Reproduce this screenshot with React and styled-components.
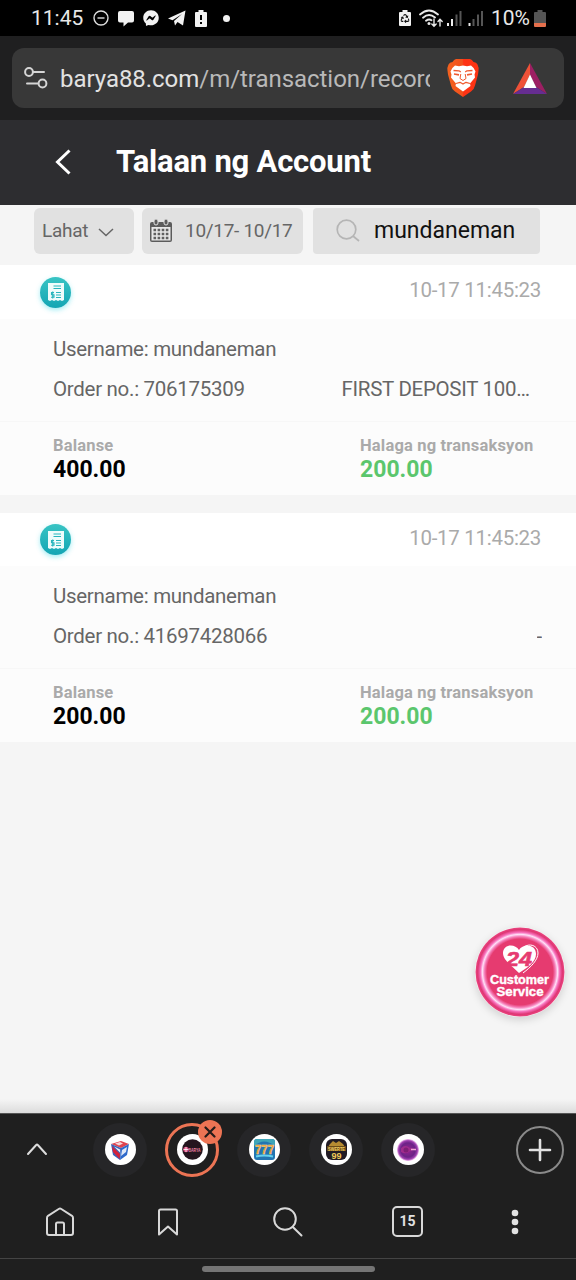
import React from "react"
import styled, { createGlobalStyle } from "styled-components"
import { FaFacebookMessenger, FaRecycle } from "react-icons/fa"

const records = [
  {
    time: "10-17 11:45:23",
    username: "mundaneman",
    order: "706175309",
    note: "FIRST DEPOSIT 100% BONUS",
    balance: "400.00",
    amount: "200.00",
  },
  {
    time: "10-17 11:45:23",
    username: "mundaneman",
    order: "41697428066",
    note: "-",
    balance: "200.00",
    amount: "200.00",
  },
]

const StatusIcons = () => (
  <StatusLeft>
    <svg width="16" height="16" viewBox="0 0 16 16" fill="none" stroke="#ddd" strokeWidth="1.4">
      <circle cx="8" cy="8" r="7" />
      <path d="M4.5 8h7" />
    </svg>
    <svg width="16" height="17" viewBox="0 0 16 17" fill="#f2f2f2">
      <path d="M2 1h12q2 0 2 2v7.500q0 2-2 2h-4L5.500 16.500V12.500H2q-2 0-2-2V3q0-2 2-2z" />
    </svg>
    <FaFacebookMessenger size={16} />
    <svg width="18" height="16" viewBox="0 0 18 16" fill="#f2f2f2">
      <path d="M0 8.500L17.500 0.500 15 15.500 9.500 12 7 15.500 6 11 14 4 4.500 10.300z" />
    </svg>
    <svg width="12" height="17" viewBox="0 0 12 17" fill="#f2f2f2">
      <path d="M3.500 0h5v2H11q1 0 1 1v13q0 1-1 1H1q-1 0-1-1V3q0-1 1-1h2.500z" />
      <path d="M6 5v5M6 12v2" stroke="#000" strokeWidth="2" />
    </svg>
    <Dot />
  </StatusLeft>
)

const StatusSignal = () => (
  <svg width="93" height="20" viewBox="0 0 93 20" fill="none">
    <path d="M3.500 2h5v2H11q1 0 1 1v12q0 1-1 1H1q-1 0-1-1V5q0-1 1-1h2.500z" fill="#f2f2f2" />
    <FaRecycle x="1.500" y="6" size={9} color="#111" />
    <g stroke="#e8e8e8" strokeWidth="1.800" strokeLinecap="round">
      <path d="M21 6.500Q30 -1.500 39 6.500M24 9.700Q30 4.500 36 9.500M27 12.800Q30 10.500 32.500 12.300" />
      <path d="M35 11v7M32.800 16l2.200 2.200 2.200-2.200M41 18v-6.500M39 13.500l2-2.200 2.200 2.200" strokeWidth="1.400" />
    </g>
    <circle cx="30" cy="15.500" r="1.500" fill="#e8e8e8" />
    <path d="M49 18v-3M53 18v-7" stroke="#eee" strokeWidth="2" />
    <path d="M57.500 18V6.500M61.500 18V3" stroke="#555" strokeWidth="2" />
    <path d="M70.500 18v-3" stroke="#eee" strokeWidth="2" />
    <path d="M74.500 18v-7M79 18V6.500M83 18V3" stroke="#555" strokeWidth="2" />
  </svg>
)

const BraveLogo = () => (
  <svg width="36" height="40" viewBox="0 0 36 40">
    <defs>
      <linearGradient id="lion" x1="0" y1="0" x2="1" y2="0">
        <stop offset="0" stopColor="#f4621f" />
        <stop offset="0.480" stopColor="#f1501c" />
        <stop offset="0.520" stopColor="#ff3214" />
        <stop offset="1" stopColor="#fb3414" />
      </linearGradient>
    </defs>
    <path
      d="M11 1h14q2 .3 3.500 3 3 .3 4 2.500 1.500 3 1 6l-.5 4-3 11q-.8 4-4 6L18 39l-8-5.500q-3.200-2-4-6l-3-11-.5-4q-.5-3 1-6 1-2.200 4-2.500Q9 1.300 11 1z"
      fill="url(#lion)"
    />
    <path
      d="M10 7.500l4 .8 4-.8 4 .8 4-.8q3.500 2.500 4.500 6l-1 3 .5 3-5 6 .5 2.500L18 33.500 10.500 28l.5-2.500-5-6 .5-3-1-3q1-3.500 4.500-6z"
      fill="#fff"
    />
    <g fill="none" stroke="#ef5a30" strokeLinejoin="round">
      <path d="M8.500 12.500l5.500.3 1.800 1.200M27.500 12.500l-5.500.3-1.800 1.200" strokeWidth="1.300" />
      <path d="M9 16l5 .8M27 16l-5 .8" strokeWidth="1.700" />
      <path d="M15.800 16l-.8 4.500 3 2 3-2-.8-4.500" strokeWidth="1" />
      <path d="M11 25.500l4-1.200 3 1.700 3-1.700 4 1.200" strokeWidth="1.300" />
    </g>
  </svg>
)

const BatLogo = () => (
  <svg width="34" height="31" viewBox="0 0 34 31">
    <path d="M17 0L0 31l11-7 6-12z" fill="#ef5138" />
    <path d="M17 0v12l6 12 11 7z" fill="#9c1f63" />
    <path d="M0 31h34l-11-7H11z" fill="#662d91" />
    <path d="M17 11.500L10.500 25h13z" fill="#fff" />
  </svg>
)

const CalendarIcon = () => (
  <svg width="22" height="24" viewBox="0 0 22 24">
    <path d="M2 3h18q2 0 2 2v16q0 2-2 2H2q-2 0-2-2V5q0-2 2-2z" fill="#5c5c5c" />
    <rect x="1.500" y="8" width="19" height="13.500" fill="#e8e8e8" />
    <rect x="4" y="0" width="4" height="6" rx="2" fill="#5c5c5c" stroke="#e1e1e1" />
    <rect x="14" y="0" width="4" height="6" rx="2" fill="#5c5c5c" stroke="#e1e1e1" />
    <path
      d="M3.500 11h15M3.500 15h15M3.500 19h15"
      stroke="#606060"
      strokeWidth="2.600"
      strokeDasharray="2.600 1.500"
    />
  </svg>
)

const ReceiptIcon = () => (
  <svg width="16" height="20" viewBox="0 0 16 20">
    <path d="M0 1h16v17l-2 1-2-1-2 1-2-1-2 1-2-1-2 1-2-1z" fill="#effcfb" />
    <path d="M5.500 4H13M5.500 6.500H13M8 10.500h5M8 13h5M8 15.500h5" stroke="#27b5bd" strokeWidth="1.200" />
    <path d="M6 10.500H3.500v2.300H6v2.500H3M4.700 9.500v7" fill="none" stroke="#27b5bd" strokeWidth="1.100" />
  </svg>
)

const ServiceBadge = () => (
  <svg width="90" height="90" viewBox="0 0 90 90">
    <defs>
      <radialGradient id="neon">
        <stop offset="0.740" stopColor="#e63b70" />
        <stop offset="0.795" stopColor="#f57bb6" />
        <stop offset="0.845" stopColor="#ffe0f8" />
        <stop offset="0.890" stopColor="#f76fba" />
        <stop offset="0.950" stopColor="#de3673" />
        <stop offset="1" stopColor="#ec4580" />
      </radialGradient>
    </defs>
    <circle cx="45" cy="45" r="44.500" fill="url(#neon)" />
    <path
      d="M44 46C36 38 28 33 28 26c0-9 12-10 16-3 4-7 17-6 17 4 0 8-9 14-17 19"
      fill="#fff"
    />
    <path d="M49 20c5-4 14-2 14 6 0 7-7 14-15 20" fill="none" stroke="#fff" strokeWidth="1" />
    <BadgeNumber x="31" y="38.500" textLength="26" lengthAdjust="spacingAndGlyphs">24</BadgeNumber>
    <BadgeText x="15" y="57" textLength="59" lengthAdjust="spacingAndGlyphs">Customer</BadgeText>
    <BadgeText x="21.500" y="68.500" textLength="47" lengthAdjust="spacingAndGlyphs">Service</BadgeText>
  </svg>
)

const CubeFavicon = () => (
  <svg width="20" height="20" viewBox="0 0 20 20">
    <path d="M1 4l10-3 8 3-8 4z" fill="#e0444f" />
    <path d="M1 4l10 4-1 12-7-5z" fill="#3a62b8" />
    <path d="M19 4l-8 4-1 12 7-5z" fill="#2e69cb" />
    <path d="M5 3.500l5-1.500 3 1.500-4 2z" fill="#f3d6dc" />
    <path d="M2 6l8 8-.3 5L3 12z" fill="#d3213a" />
    <path d="M4 6.500l6 3v3z" fill="#eff2fa" />
    <path d="M12 10l5-3-1 5-5 4z" fill="#dfe8f8" />
  </svg>
)

const LogoFavicon = () => (
  <svg width="21" height="21" viewBox="0 0 21 21">
    <circle cx="10.500" cy="10.500" r="10.300" fill="#24151e" />
    <circle cx="4" cy="10.500" r="2.700" fill="#db4c80" />
    <path d="M1.500 10.500h5M4 8v5" stroke="#fff" strokeWidth="0.800" />
    <FaviconText x="6.500" y="12.500" size="5" color="#f083a6" textLength="12" lengthAdjust="spacingAndGlyphs">BARYA</FaviconText>
  </svg>
)

const SevensFavicon = () => (
  <svg width="21" height="21" viewBox="0 0 21 21">
    <rect width="21" height="21" rx="3" fill="#2275b1" />
    <path d="M0 7Q10-2 21 7V3q0-3-3-3H3Q0 0 0 3z" fill="#3fa6b8" />
    <path d="M2 17.500q8-2 17 0" stroke="#65d3ef" strokeWidth="2" fill="none" />
    <FaviconText x="1" y="15" size="13" color="#f08a1c" $edge="#ffe39a" textLength="19" lengthAdjust="spacingAndGlyphs">777</FaviconText>
  </svg>
)

const GoldFavicon = () => (
  <svg width="21" height="21" viewBox="0 0 21 21">
    <rect width="21" height="21" rx="6" fill="#211b24" />
    <path d="M4 5l3-3 3 2 3-2 4 3 2 3H2z" fill="#b78b32" />
    <rect x="1" y="7" width="19" height="5" fill="#6b4b18" />
    <FaviconText x="2" y="11.500" size="5" color="#f3ce62" textLength="17" lengthAdjust="spacingAndGlyphs">SWERTE</FaviconText>
    <FaviconText x="5.500" y="19.500" size="9" color="#f0cc58" textLength="10" lengthAdjust="spacingAndGlyphs">99</FaviconText>
  </svg>
)

const OrbFavicon = () => (
  <svg width="22" height="22" viewBox="0 0 22 22">
    <defs>
      <radialGradient id="orb">
        <stop offset="0.200" stopColor="#8a238e" />
        <stop offset="0.650" stopColor="#6b2386" />
        <stop offset="0.850" stopColor="#9c3cad" />
        <stop offset="1" stopColor="#f5c6f1" />
      </radialGradient>
    </defs>
    <circle cx="11" cy="11" r="11" fill="url(#orb)" />
    <path d="M4 9q4-4 9 0l6 1-6 2q-4 4-9 1z" fill="#a02c8c" />
    <circle cx="9" cy="11" r="2.500" fill="#7d1f76" />
    <path d="M14 10.500h5" stroke="#f1a5d4" strokeWidth="1.500" />
  </svg>
)

const RecordCard = ({ record }) => (
  <Card>
    <CardTop>
      <ReceiptBadge>
        <ReceiptIcon />
      </ReceiptBadge>
      <Time>{record.time}</Time>
    </CardTop>
    <CardBody>
      <Line>
        <span>Username: {record.username}</span>
      </Line>
      <Line>
        <span>Order no.: {record.order}</span>
        <Note $dash={record.note === "-"}>{record.note}</Note>
      </Line>
    </CardBody>
    <CardFooter>
      <Amount>
        <AmountLabel>Balanse</AmountLabel>
        <AmountValue>{record.balance}</AmountValue>
      </Amount>
      <Amount>
        <AmountLabel>Halaga ng transaksyon</AmountLabel>
        <AmountValue $green>{record.amount}</AmountValue>
      </Amount>
    </CardFooter>
  </Card>
)

const App = () => (
  <Phone>
    <GlobalStyle />
    <StatusBar>
      <Clock>11:45</Clock>
      <StatusIcons />
      <StatusRight>
        <StatusSignal />
        <Percent>10%</Percent>
        <svg width="12" height="17" viewBox="0 0 12 17">
          <path d="M3.500 0h5v2H11q1 0 1 1v10H0V3q0-1 1-1h2.500z" fill="#555" />
          <path d="M0 13h12v3q0 1-1 1H1q-1 0-1-1z" fill="#e5704d" />
        </svg>
      </StatusRight>
    </StatusBar>
    <BrowserBar>
      <UrlField>
        <svg width="24" height="22" viewBox="0 0 24 22" fill="none" stroke="#d5d5d5" strokeWidth="2">
          <circle cx="5" cy="5" r="3.900" />
          <circle cx="18.500" cy="16.500" r="3.900" />
          <path d="M9 5h11M3 16.500h11" strokeLinecap="round" />
        </svg>
        <Url>
          <UrlHost>barya88.com</UrlHost>/m/transaction/record
        </Url>
        <BraveLogo />
        <BatLogo />
      </UrlField>
    </BrowserBar>
    <Header>
      <svg width="18" height="28" viewBox="0 0 18 28" fill="none" stroke="#fff" strokeWidth="3">
        <path d="M15.500 2.500L3.500 14l12 11.500" />
      </svg>
      <Title>Talaan ng Account</Title>
    </Header>
    <Content>
      <Filters>
        <TypeFilter>
          Lahat
          <Chevron width="16" height="9" viewBox="0 0 16 9" fill="none" stroke="#666" strokeWidth="1.500">
            <path d="M1 1l7 6.500L15 1" />
          </Chevron>
        </TypeFilter>
        <DateFilter>
          <CalendarIcon />
          <span>10/17- 10/17</span>
        </DateFilter>
        <SearchFilter>
          <svg width="24" height="24" viewBox="0 0 24 24" fill="none" stroke="#b5b5b5" strokeWidth="1.700">
            <circle cx="10.500" cy="10.500" r="9.300" />
            <path d="M17 17l6 5" />
          </svg>
          <span>mundaneman</span>
        </SearchFilter>
      </Filters>
      {records.map(record => (
        <RecordCard key={record.order} record={record} />
      ))}
      <Service>
        <ServiceBadge />
      </Service>
    </Content>
    <BottomBar>
      <TabStrip>
        <ChevronButton>
          <svg width="22" height="14" viewBox="0 0 22 14" fill="none" stroke="#ddd" strokeWidth="2" strokeLinecap="round" strokeLinejoin="round">
            <path d="M2 12l8.200-9q.8-1 1.600 0L20 12" />
          </svg>
        </ChevronButton>
        <Tab>
          <Favicon><CubeFavicon /></Favicon>
        </Tab>
        <Tab $active>
          <Favicon><LogoFavicon /></Favicon>
          <CloseBadge>
            <svg width="12" height="12" viewBox="0 0 12 12" stroke="#241c1a" strokeWidth="2.200" strokeLinecap="round">
              <path d="M1.500 1.500l9 9M10.500 1.500l-9 9" />
            </svg>
          </CloseBadge>
        </Tab>
        <Tab>
          <Favicon><SevensFavicon /></Favicon>
        </Tab>
        <Tab>
          <Favicon><GoldFavicon /></Favicon>
        </Tab>
        <Tab>
          <Favicon><OrbFavicon /></Favicon>
        </Tab>
        <AddTab>
          <svg width="24" height="24" viewBox="0 0 24 24" stroke="#e2e2e2" strokeWidth="2.600" strokeLinecap="round">
            <path d="M12 2v20M2 12h20" />
          </svg>
        </AddTab>
      </TabStrip>
      <NavRow>
        <svg width="28" height="30" viewBox="0 0 28 30" fill="none" stroke="#d8d8d8" strokeWidth="2" strokeLinejoin="round">
          <path d="M1 11q0-1.500 1-2.200L12.700 2q1.300-.8 2.600 0L26 8.800q1 .7 1 2.200V26q0 2-2 2H3q-2 0-2-2z" />
          <path d="M10 28V17q0-1.500 1.500-1.500h5Q18 15.500 18 17v11" />
        </svg>
        <svg width="20" height="28" viewBox="0 0 20 28" fill="none" stroke="#d8d8d8" strokeWidth="2" strokeLinejoin="round">
          <path d="M1 3q0-1.500 1.500-1.500h15Q19 1.500 19 3v23.500l-9-8-9 8z" />
        </svg>
        <svg width="30" height="30" viewBox="0 0 30 30" fill="none" stroke="#d8d8d8" strokeWidth="2" strokeLinecap="round">
          <circle cx="12" cy="12" r="10.800" />
          <path d="M19.800 20l8.700 8.500" />
        </svg>
        <TabCount>15</TabCount>
        <svg width="8" height="26" viewBox="0 0 8 26" fill="#e2e2e2">
          <circle cx="4" cy="4" r="3.300" />
          <circle cx="4" cy="13" r="3.300" />
          <circle cx="4" cy="22" r="3.300" />
        </svg>
      </NavRow>
      <GestureBar>
        <GestureHandle />
      </GestureBar>
    </BottomBar>
  </Phone>
)

const GlobalStyle = createGlobalStyle`
  * {
    box-sizing: border-box;
  }
  body {
    margin: 0;
    font-family: Roboto, "Liberation Sans", sans-serif;
  }
  svg {
    display: block;
    flex-shrink: 0;
  }
`

const Phone = styled.div`
  display: flex;
  flex-direction: column;
  width: 576px;
  height: 1280px;
  overflow: hidden;
  background-color: #f5f5f5;
`

const StatusBar = styled.div`
  display: flex;
  align-items: center;
  height: 36px;
  padding: 0 30px 0 31px;
  background-color: #000;
  color: #e8e8e8;
`

const Clock = styled.span`
  width: 62px;
  font-size: 21px;
`

const StatusLeft = styled.div`
  display: flex;
  align-items: center;
  gap: 9px;
  color: #f2f2f2;
`

const Dot = styled.div`
  width: 7px;
  height: 7px;
  margin-left: 7px;
  border-radius: 50%;
  background-color: #f2f2f2;
`

const StatusRight = styled.div`
  display: flex;
  align-items: center;
  margin-left: auto;
`

const Percent = styled.span`
  width: 42px;
  margin-left: -1px;
  margin-right: 1px;
  font-size: 21px;
`

const BrowserBar = styled.div`
  height: 84px;
  padding: 12px;
  background-color: #1f1f20;
`

const UrlField = styled.div`
  display: flex;
  align-items: center;
  height: 60px;
  padding: 0 17px 0 12px;
  border-radius: 12px;
  background-color: #383838;
`

const Url = styled.div`
  flex: none;
  width: 370px;
  margin: 2px 15px 0 12px;
  overflow: hidden;
  white-space: nowrap;
  font-size: 24px;
  letter-spacing: -0.04px;
  line-height: 32px;
  color: #b9b9b9;

  & + svg + svg {
    margin-left: 32px;
  }
`

const UrlHost = styled.span`
  color: #e2e2e2;
`

const Header = styled.div`
  display: flex;
  align-items: center;
  height: 85px;
  padding: 0 0 2px 54px;
  background-color: #2d2d30;
`

const Title = styled.h1`
  margin: 0 0 0 44px;
  font-size: 31px;
  font-weight: 700;
  letter-spacing: -0.22px;
  color: #fff;
`

const Content = styled.div`
  position: relative;
  height: 908px;
  background: linear-gradient(#f5f5f5 calc(100% - 14px), #dcdcdc);
`

const Filters = styled.div`
  display: flex;
  gap: 8px;
  height: 60px;
  padding: 3px 36px 11px 34px;
`

const Filter = styled.div`
  display: flex;
  align-items: center;
  height: 46px;
  padding-bottom: 1px;
  border-radius: 6px;
  background-color: #e1e1e1;
  color: #666;
  font-size: 19px;
  letter-spacing: -0.3px;
`

const TypeFilter = styled(Filter)`
  gap: 10px;
  width: 100px;
  padding-left: 8px;
`

const Chevron = styled.svg`
  margin-top: 4px;
`

const DateFilter = styled(Filter)`
  gap: 13px;
  width: 161px;
  padding-left: 8px;
`

const SearchFilter = styled(Filter)`
  gap: 14px;
  width: 227px;
  margin-left: 2px;
  padding-left: 23px;
  border-radius: 4px;
  color: #111;
  font-size: 23px;
  letter-spacing: 0;
`

const Card = styled.div`
  height: 230px;
  background-color: #fcfcfc;

  & + & {
    height: 229px;
    margin-top: 18px;
  }
`

const CardTop = styled.div`
  display: flex;
  align-items: center;
  justify-content: space-between;
  height: 54px;
  padding: 0 35px 0 40px;
  background-color: #fff;

  ${Card} + ${Card} & {
    height: 53px;
  }
`

const ReceiptBadge = styled.div`
  display: flex;
  align-items: center;
  justify-content: center;
  width: 31px;
  height: 31px;
  border-radius: 50%;
  background: linear-gradient(#38c4c4, #14a5b4);
  box-shadow: 0 2px 5px rgba(50, 215, 230, 0.45);
`

const Time = styled.span`
  margin-top: -4px;
  font-size: 20.5px;
  letter-spacing: -0.3px;
  color: #aaa;
`

const CardBody = styled.div`
  height: 103px;
  padding: 10px 46px 0 53px;
  border-bottom: 1px solid #f7f7f7;
`

const Line = styled.div`
  display: flex;
  justify-content: space-between;
  height: 40px;
  font-size: 20.5px;
  letter-spacing: -0.29px;
  line-height: 40px;
  color: #666;
`

const Note = styled.span`
  width: ${props => (props.$dash ? "auto" : "188.5px")};
  margin-right: ${props => (props.$dash ? "-12px" : "0")};
  overflow: hidden;
  text-overflow: ellipsis;
  white-space: nowrap;
`

const CardFooter = styled.div`
  display: grid;
  grid-template-columns: 307px 1fr;
  height: 73px;
  padding: 14px 0 0 53px;
`

const Amount = styled.div`
  display: flex;
  flex-direction: column;
`

const AmountLabel = styled.span`
  font-size: 16.5px;
  font-weight: 700;
  letter-spacing: 0.18px;
  line-height: 20px;
  color: #aaa;
`

const AmountValue = styled.span`
  font-size: 23px;
  font-weight: 700;
  line-height: 27px;
  color: ${props => (props.$green ? "#5bc66d" : "#000")};
`

const Service = styled.div`
  position: absolute;
  right: 11px;
  top: 722px;
  border-radius: 50%;
  box-shadow: 0 3px 9px rgba(0, 0, 0, 0.15);
`

const BadgeText = styled.text`
  font-family: "Liberation Sans", sans-serif;
  font-size: 13px;
  font-weight: 700;
  fill: #fff;
  stroke: #fff;
  stroke-width: 0.4px;
`

const BadgeNumber = styled.text`
  font-family: "Liberation Sans", sans-serif;
  font-size: 20px;
  font-style: italic;
  font-weight: 700;
  fill: #e63b70;
  stroke: #e63b70;
  stroke-width: 0.6px;
`

const BottomBar = styled.div`
  height: 167px;
  border-top: 1px solid #555;
  background-color: #1f1f1f;
`

const TabStrip = styled.div`
  display: flex;
  align-items: center;
  gap: 18px;
  height: 71px;
  padding: 0 12px 0 0;
`

const ChevronButton = styled.div`
  display: flex;
  justify-content: center;
  width: 75px;
  padding: 0 2px 2px 0;
`

const Tab = styled.div`
  position: relative;
  display: flex;
  align-items: center;
  justify-content: center;
  width: 54px;
  height: 54px;
  border-radius: 50%;
  border: ${props => (props.$active ? "3px solid #ec7454" : "none")};
  background-color: ${props => (props.$active ? "#1f1f1f" : "#262628")};
`

const Favicon = styled.div`
  display: flex;
  align-items: center;
  justify-content: center;
  width: 31px;
  height: 31px;
  border-radius: 50%;
  background-color: #fff;
`

const FaviconText = styled.text`
  font-family: "Liberation Sans", sans-serif;
  font-size: ${props => props.size}px;
  font-weight: 700;
  fill: ${props => props.color};
  stroke: ${props => props.$edge || "none"};
  stroke-width: 0.5px;
`

const CloseBadge = styled.div`
  position: absolute;
  top: -6px;
  right: -6px;
  display: flex;
  align-items: center;
  justify-content: center;
  width: 24px;
  height: 24px;
  border-radius: 50%;
  background-color: #ec7454;
`

const AddTab = styled.div`
  display: flex;
  align-items: center;
  justify-content: center;
  width: 48px;
  height: 48px;
  margin-left: auto;
  border: 2.5px solid #8a8a8a;
  border-radius: 50%;
`

const NavRow = styled.div`
  display: grid;
  grid-template-columns: 120px 95px 146px 93px 122px;
  align-items: center;
  justify-items: center;
  height: 73px;
`

const TabCount = styled.div`
  width: 31px;
  height: 31px;
  border: 2px solid #d8d8d8;
  border-radius: 5px;
  font-size: 14px;
  font-weight: 700;
  line-height: 27px;
  text-align: center;
  color: #e2e2e2;
`

const GestureBar = styled.div`
  display: flex;
  justify-content: center;
  height: 22px;
  padding-top: 7px;
  border-top: 1px solid #444;
`

const GestureHandle = styled.div`
  width: 173px;
  height: 6px;
  border-radius: 3px;
  background-color: #757575;
`

export default App
